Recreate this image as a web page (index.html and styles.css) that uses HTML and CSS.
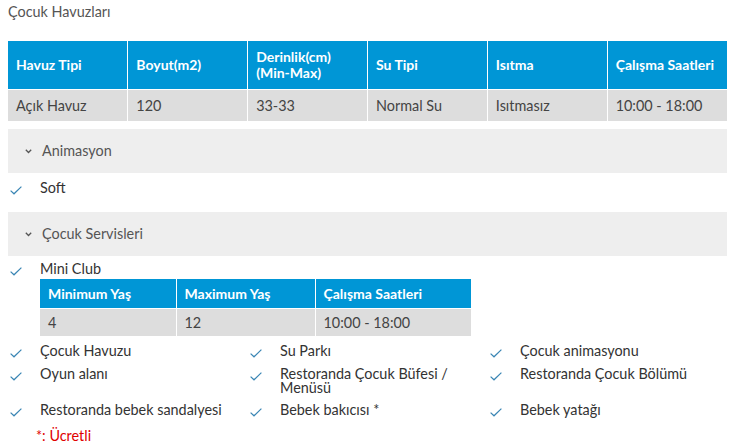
FILE: index.html
```html
<!DOCTYPE html>
<html lang="tr">
<head>
<meta charset="utf-8">
<link rel="stylesheet" href="styles.css">
</head>
<body>
<div class="page">
  <h2 class="title">Çocuk Havuzları</h2>
  <table class="pool-table">
    <thead>
      <tr>
        <th>Havuz Tipi</th>
        <th>Boyut(m2)</th>
        <th>Derinlik(cm)<br>(Min-Max)</th>
        <th>Su Tipi</th>
        <th>Isıtma</th>
        <th>Çalışma Saatleri</th>
      </tr>
    </thead>
    <tbody>
      <tr>
        <td>Açık Havuz</td>
        <td>120</td>
        <td>33-33</td>
        <td>Normal Su</td>
        <td>Isıtmasız</td>
        <td>10:00 - 18:00</td>
      </tr>
    </tbody>
  </table>

  <div class="acc-head"><span class="chev"><svg width="7" height="5" viewBox="0 0 7 5"><path d="M0.8 0.8 L3.5 3.5 L6.2 0.8" fill="none" stroke="#555" stroke-width="1.3"/></svg></span>Animasyon</div>
  <div class="feature single"><span class="check"><svg width="12" height="9" viewBox="0 0 12 9"><path d="M0.6 4.6 L4 7.8 L11.4 0.6" fill="none" stroke="#3a86b4" stroke-width="1.2"/></svg></span><span>Soft</span></div>

  <div class="acc-head"><span class="chev"><svg width="7" height="5" viewBox="0 0 7 5"><path d="M0.8 0.8 L3.5 3.5 L6.2 0.8" fill="none" stroke="#555" stroke-width="1.3"/></svg></span>Çocuk Servisleri</div>
  <div class="feature club"><span class="check"><svg width="12" height="9" viewBox="0 0 12 9"><path d="M0.6 4.6 L4 7.8 L11.4 0.6" fill="none" stroke="#3a86b4" stroke-width="1.2"/></svg></span><span>Mini Club</span></div>
  <table class="club-table">
    <thead>
      <tr><th class="c1">Minimum Yaş</th><th class="c2">Maximum Yaş</th><th class="c3">Çalışma Saatleri</th></tr>
    </thead>
    <tbody>
      <tr><td>4</td><td>12</td><td>10:00 - 18:00</td></tr>
    </tbody>
  </table>

  <div class="grid">
    <div class="feature"><span class="check"><svg width="12" height="9" viewBox="0 0 12 9"><path d="M0.6 4.6 L4 7.8 L11.4 0.6" fill="none" stroke="#3a86b4" stroke-width="1.2"/></svg></span><span>Çocuk Havuzu</span></div>
    <div class="feature"><span class="check"><svg width="12" height="9" viewBox="0 0 12 9"><path d="M0.6 4.6 L4 7.8 L11.4 0.6" fill="none" stroke="#3a86b4" stroke-width="1.2"/></svg></span><span>Su Parkı</span></div>
    <div class="feature"><span class="check"><svg width="12" height="9" viewBox="0 0 12 9"><path d="M0.6 4.6 L4 7.8 L11.4 0.6" fill="none" stroke="#3a86b4" stroke-width="1.2"/></svg></span><span>Çocuk animasyonu</span></div>
    <div class="feature"><span class="check"><svg width="12" height="9" viewBox="0 0 12 9"><path d="M0.6 4.6 L4 7.8 L11.4 0.6" fill="none" stroke="#3a86b4" stroke-width="1.2"/></svg></span><span>Oyun alanı</span></div>
    <div class="feature"><span class="check"><svg width="12" height="9" viewBox="0 0 12 9"><path d="M0.6 4.6 L4 7.8 L11.4 0.6" fill="none" stroke="#3a86b4" stroke-width="1.2"/></svg></span><span>Restoranda Çocuk Büfesi / Menüsü</span></div>
    <div class="feature"><span class="check"><svg width="12" height="9" viewBox="0 0 12 9"><path d="M0.6 4.6 L4 7.8 L11.4 0.6" fill="none" stroke="#3a86b4" stroke-width="1.2"/></svg></span><span>Restoranda Çocuk Bölümü</span></div>
    <div class="feature"><span class="check"><svg width="12" height="9" viewBox="0 0 12 9"><path d="M0.6 4.6 L4 7.8 L11.4 0.6" fill="none" stroke="#3a86b4" stroke-width="1.2"/></svg></span><span>Restoranda bebek sandalyesi</span></div>
    <div class="feature"><span class="check"><svg width="12" height="9" viewBox="0 0 12 9"><path d="M0.6 4.6 L4 7.8 L11.4 0.6" fill="none" stroke="#3a86b4" stroke-width="1.2"/></svg></span><span>Bebek bakıcısı *</span></div>
    <div class="feature"><span class="check"><svg width="12" height="9" viewBox="0 0 12 9"><path d="M0.6 4.6 L4 7.8 L11.4 0.6" fill="none" stroke="#3a86b4" stroke-width="1.2"/></svg></span><span>Bebek yatağı</span></div>
  </div>
  <div class="paid">*: Ücretli</div>
</div>
</body>
</html>
```

FILE: styles.css
```css
* { box-sizing: border-box; }
html, body { margin: 0; padding: 0; background: #fff; }
body {
  font-family: Lato, "Open Sans", "Liberation Sans", sans-serif;
  font-size: 14.4px;
  color: #444;
}
.page {
  width: 719px;
  margin-left: 8px;
}
.title {
  margin: 0;
  padding-top: 2px;
  font-size: 14.4px;
  font-weight: 400;
  line-height: 20px;
  color: #555;
}
.pool-table {
  margin-top: 19px;
  width: 719px;
  border-collapse: collapse;
  table-layout: fixed;
}
.pool-table th, .pool-table td {
  border: 1px solid #fff;
  text-align: left;
  padding: 0 8px;
}
.pool-table tr > :first-child { border-left: 0; }
.pool-table tr > :last-child { border-right: 0; }
.pool-table thead th { border-top: 0; }
.pool-table th {
  background: #0096d6;
  color: #fff;
  font-weight: 700;
  font-size: 14px;
  height: 48px;
  line-height: 16px;
}
.pool-table td {
  background: #dddddd;
  color: #444;
  height: 32px;
  border-bottom: 0;
}
.acc-head {
  display: flex;
  align-items: center;
  height: 44px;
  background: #eeeeee;
  color: #555;
  margin-top: 8px;
  padding-left: 17px;
  padding-bottom: 2px;
}
.chev {
  display: flex;
  width: 17px;
  padding-top: 2px;
}
.feature {
  display: flex;
  align-items: flex-start;
  line-height: 14px;
  color: #333;
}
.check {
  flex: 0 0 32px;
  padding-left: 2px;
  padding-top: 5px;
  display: flex;
}
.feature.single {
  padding-top: 8px;
  height: 31px;
  margin-bottom: 8px;
}
.feature.club {
  padding-top: 6px;
  height: 23px;
}
.club-table {
  margin-left: 32px;
  border-collapse: collapse;
  table-layout: fixed;
  width: 431px;
}
.club-table .c1 { width: 136px; }
.club-table .c2 { width: 139px; }
.club-table .c3 { width: 156px; }
.club-table th, .club-table td {
  text-align: left;
  padding: 0 8px;
  border: 1px solid #fff;
  border-top: 0;
}
.club-table tr > :first-child { border-left: 0; }
.club-table tr > :last-child { border-right: 0; }
.club-table th {
  background: #0096d6;
  color: #fff;
  font-weight: 700;
  font-size: 14px;
  height: 29px;
}
.club-table td {
  background: #dddddd;
  height: 28px;
  border-bottom: 0;
}
.grid {
  margin-top: 4px;
  display: grid;
  grid-template-columns: 240px 240px 239px;
}
.grid .feature {
  padding-top: 4px;
  padding-bottom: 4.5px;
}
.grid .feature > span:last-child { padding-right: 10px; }
.paid {
  color: #e00000;
  margin-top: 6px;
  padding-left: 28px;
  line-height: 15px;
}
```
